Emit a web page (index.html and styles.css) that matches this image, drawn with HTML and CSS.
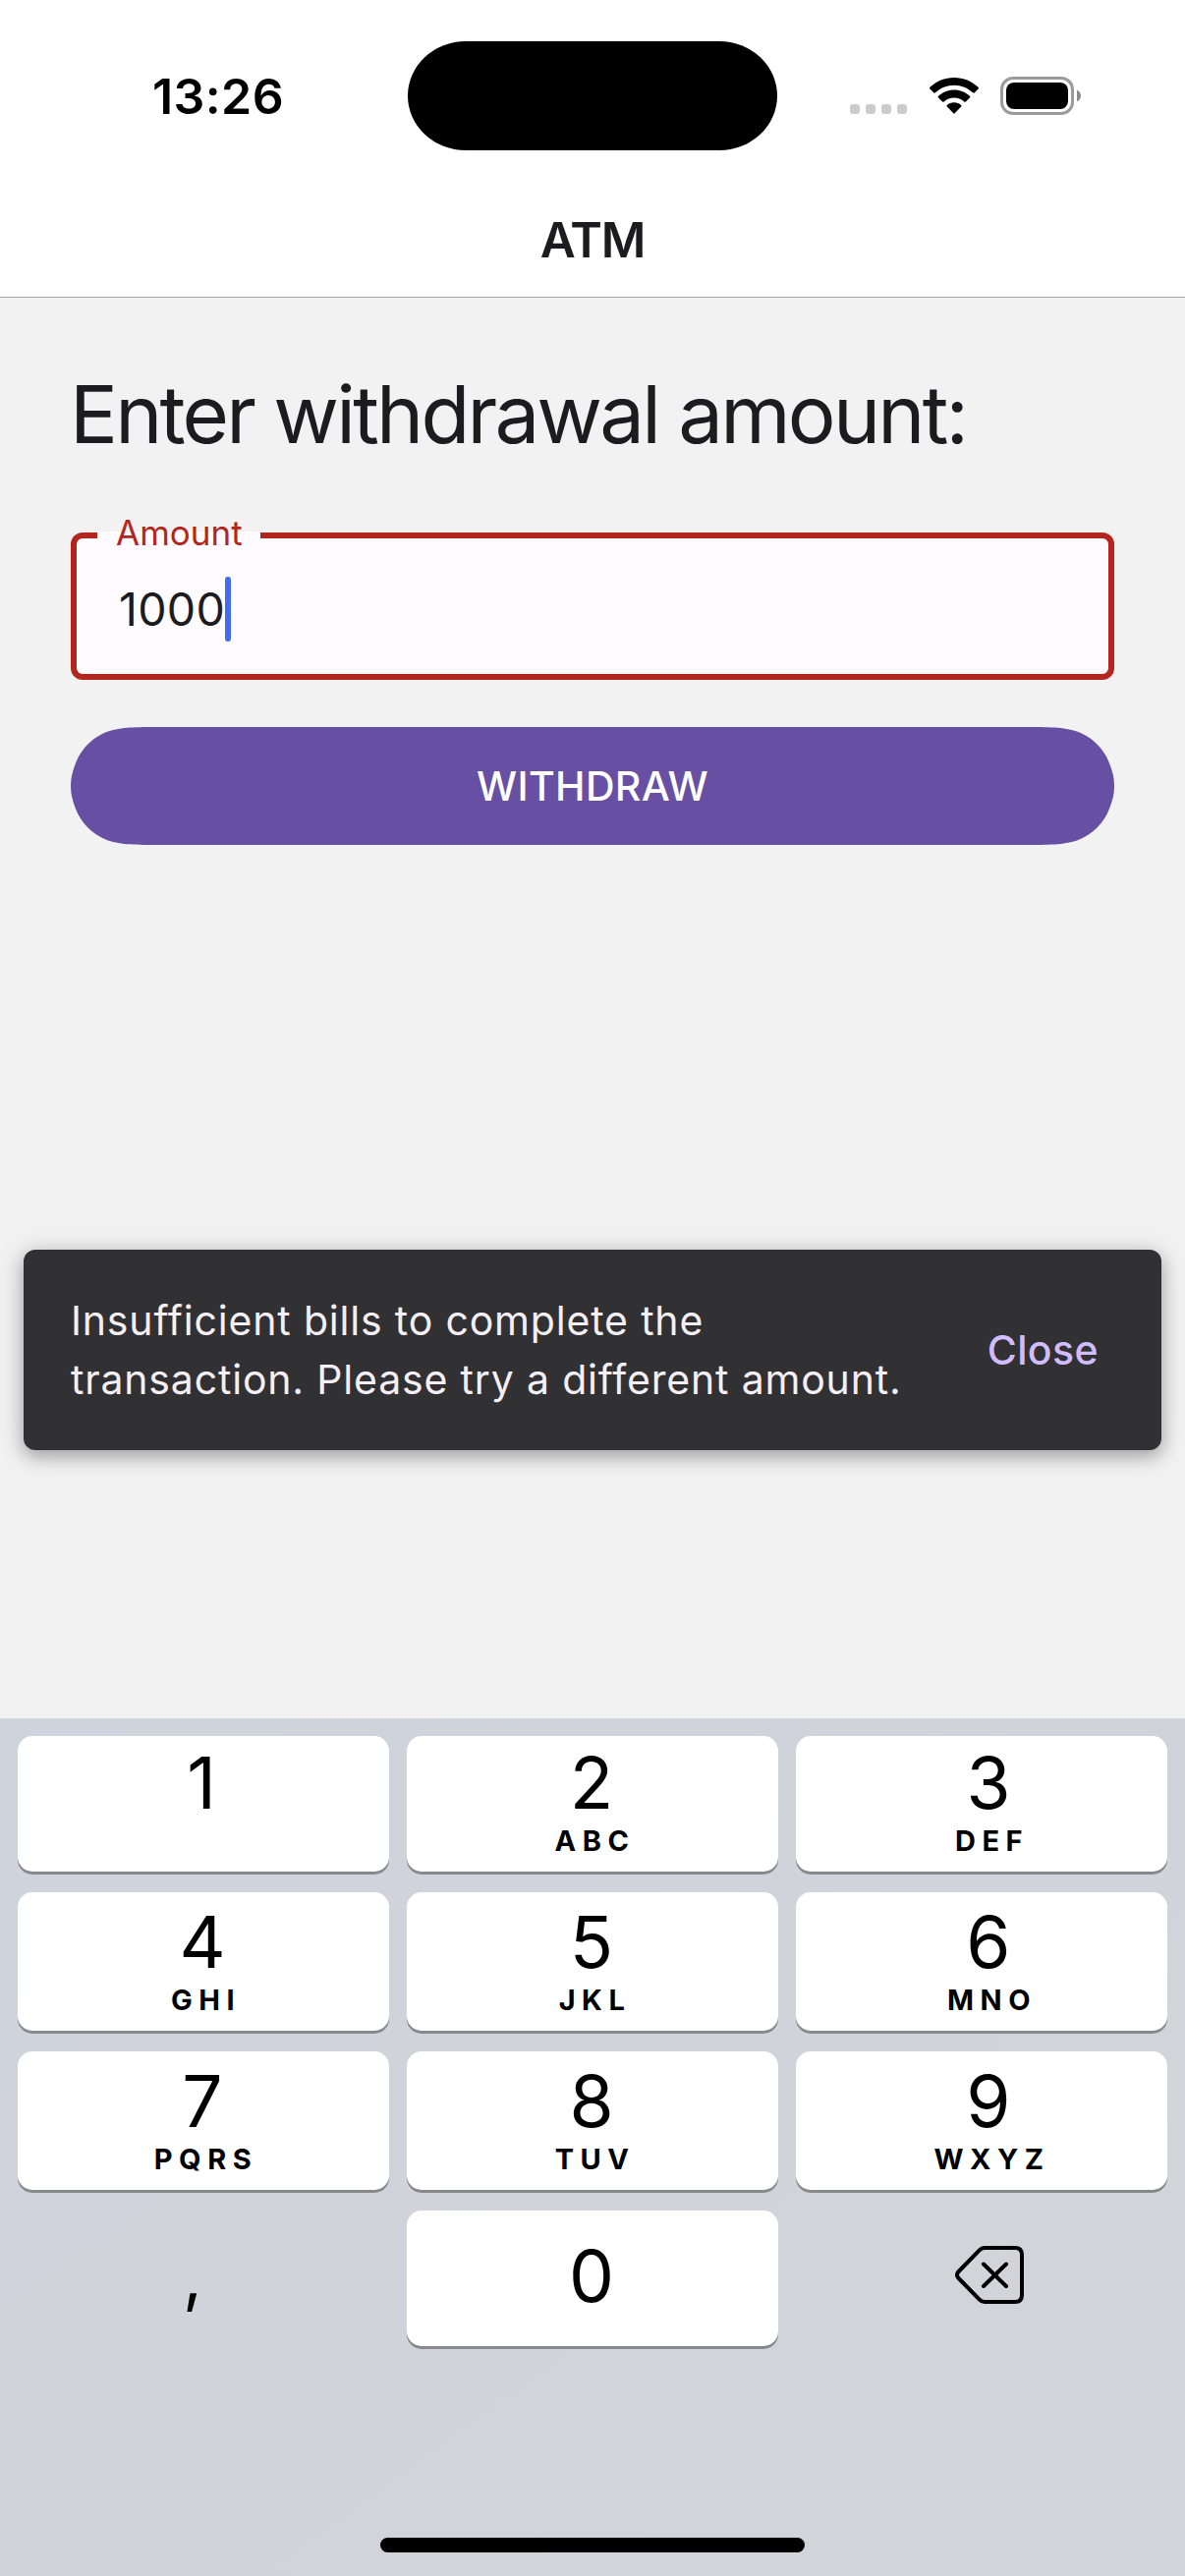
FILE: index.html
```html
<!DOCTYPE html>
<html lang="en">
<head>
<meta charset="utf-8">
<title>ATM</title>
<link rel="stylesheet" href="styles.css">
</head>
<body>
<div class="phone">
  <div class="status">
    <div class="status-side"><span class="time">13:26</span></div>
    <div class="island"></div>
    <div class="status-side status-icons">
      <svg class="dots" width="58" height="10" viewBox="0 0 58 10" fill="#cbcbcb">
        <rect width="10" height="10" rx="3"/><rect x="16" width="10" height="10" rx="3"/><rect x="32" width="10" height="10" rx="3"/><rect x="48" width="10" height="10" rx="3"/>
      </svg>
      <svg class="wifi" width="50" height="37" viewBox="0 0 50 37">
        <path d="M25 0C34.500 0 43.200 3.700 49.600 9.800Q50.400 10.600 49.600 11.500L45.800 15.300Q45 16 44.100 15.300C39 10.500 32.300 7.700 25 7.700S11 10.500 5.900 15.300Q5 16 4.200 15.300L.4 11.500Q-.4 10.600.4 9.800C6.800 3.700 15.500 0 25 0Z"/>
        <path d="M25 12.500C31.200 12.500 36.800 14.900 41 18.800Q41.800 19.600 41 20.500L36.900 24.500Q36.100 25.200 35.300 24.500C32.500 21.900 29 20.400 25 20.400S17.500 21.900 14.700 24.500Q13.900 25.200 13.100 24.500L9 20.500Q8.200 19.600 9 18.800C13.200 14.900 18.800 12.500 25 12.500Z"/>
        <path d="M25 25.300C27.700 25.300 30.200 26.200 32.200 27.900Q33 28.700 32.200 29.500L25.700 36.200Q25 36.900 24.300 36.200L17.800 29.500Q17 28.700 17.800 27.900C19.800 26.200 22.300 25.300 25 25.300Z"/>
      </svg>
      <svg class="battery" width="82" height="39" viewBox="0 0 82 39">
        <rect x="1.500" y="1.500" width="72" height="36" rx="11.500" fill="none" stroke="#9b9b9b" stroke-width="3"/>
        <rect x="6" y="6" width="63" height="27" rx="8"/>
        <path d="M78 13.500C80.700 14.800 82 17 82 19.500S80.700 24.200 78 25.500Z" fill="#8b8b8b"/>
      </svg>
    </div>
  </div>
  <header class="header"><h1 class="header-title">ATM</h1></header>
  <main class="content">
    <h2 class="heading">Enter withdrawal amount:</h2>
    <div class="field">
      <span class="field-label">Amount</span>
      <span class="field-value">1000</span><span class="caret"></span>
    </div>
    <button class="withdraw"><span>WITHDRAW</span></button>
    <div class="snackbar">
      <p class="snackbar-text">Insufficient bills to complete the<br>transaction. Please try a different amount.</p>
      <span class="snackbar-action">Close</span>
    </div>
  </main>
  <div class="keyboard">
    <div class="keys">
      <div class="key key-one"><span class="digit">1</span></div>
      <div class="key"><span class="digit">2</span><span class="letters">ABC</span></div>
      <div class="key"><span class="digit">3</span><span class="letters">DEF</span></div>
      <div class="key"><span class="digit">4</span><span class="letters">GHI</span></div>
      <div class="key"><span class="digit">5</span><span class="letters">JKL</span></div>
      <div class="key"><span class="digit">6</span><span class="letters">MNO</span></div>
      <div class="key"><span class="digit">7</span><span class="letters">PQRS</span></div>
      <div class="key"><span class="digit">8</span><span class="letters">TUV</span></div>
      <div class="key"><span class="digit">9</span><span class="letters">WXYZ</span></div>
      <div class="key key-plain"><span class="comma">,</span></div>
      <div class="key key-zero"><span class="digit">0</span></div>
      <div class="key key-plain">
        <svg class="backspace" width="70" height="59" viewBox="0 0 70 59" fill="none" stroke="#000" stroke-width="4" stroke-linecap="round" stroke-linejoin="round">
          <path d="M30 2H61Q68 2 68 9V50Q68 57 61 57H30Q27 57 24.800 54.600L3.200 32.500Q.8 29.500 3.200 26.500L24.800 4.400Q27 2 30 2Z"/>
          <path d="M29 18.500L52 41M52 18.500L29 41"/>
        </svg>
      </div>
    </div>
    <div class="home"></div>
  </div>
</div>
</body>
</html>
```
FILE: styles.css
```css
* { box-sizing: border-box; margin: 0; padding: 0; }

body {
  font-family: Inter, "Liberation Sans", sans-serif;
  color: #1c1b1f;
  background: #f2f2f2;
}

.phone {
  width: 1206px;
  height: 2622px;
  display: flex;
  flex-direction: column;
  overflow: hidden;
}

/* Status bar */
.status {
  height: 188px;
  padding-top: 41.500px;
  display: flex;
  align-items: flex-start;
  background: #fff;
}

.status-side {
  width: 415px;
  height: 111px;
  display: flex;
}

.time {
  margin: 26.500px 0 0 155px;
  font-size: 50px;
  line-height: 60px;
  font-weight: 600;
  letter-spacing: 0.400px;
  color: #000;
}

.island {
  width: 376px;
  height: 111px;
  border-radius: 59px / 55.500px;
  background: #000;
}

.status-icons { padding-left: 74px; }
.dots { margin-top: 64.500px; }
.wifi { margin: 37.500px 0 0 23px; }
.battery { margin: 36.500px 0 0 22px; }

/* Navigation header */
.header {
  height: 115px;
  display: flex;
  justify-content: center;
  background: #fff;
  border-bottom: 1px solid #a9a9ac;
}

.header-title {
  margin-top: 26px;
  font-size: 49.500px;
  line-height: 60px;
  font-weight: 600;
  letter-spacing: -1.200px;
}

/* Withdrawal form */
.content {
  flex: 1;
  padding: 65px 72px 0;
  position: relative;
}

.heading {
  margin-left: -1px;
  font-size: 81.500px;
  line-height: 108px;
  font-weight: 400;
  letter-spacing: -2.800px;
  white-space: nowrap;
}

.field {
  position: relative;
  height: 150px;
  margin-top: 66px;
  padding: 6px 0 0 43px;
  border: 6px solid #b3261e;
  border-radius: 12px;
  background: #fffbff;
  display: flex;
  align-items: center;
}

.field-label {
  position: absolute;
  left: 21px;
  top: -7px;
  width: 166px;
  height: 7px;
  padding-left: 19px;
  background: #fffbff;
  color: #b3261e;
  font-size: 35px;
  line-height: 2px;
}

.field-value {
  font-size: 46.500px;
  line-height: 60px;
  letter-spacing: 0.300px;
}

.caret {
  width: 6px;
  height: 66px;
  border-radius: 3px;
  background: #426bf2;
}

.withdraw {
  display: flex;
  align-items: center;
  justify-content: center;
  width: 1062px;
  height: 120px;
  margin-top: 48px;
  border: 0;
  background: #6750a4;
  color: #fff;
  font: 500 41px/60px Inter, "Liberation Sans", sans-serif;
  letter-spacing: 0.300px;
  clip-path: path("M91.700 0H970.300C996.700 0 1009.900 0 1024.100 4.500C1039.600 10.100 1051.900 22.400 1057.500 37.900C1060.500 46 1062 52 1062 60S1060.500 74 1057.500 82.100C1051.900 97.600 1039.600 109.900 1024.100 115.500C1009.900 120 996.700 120 970.300 120H91.700C65.300 120 52.100 120 37.900 115.500C22.400 109.900 10.100 97.600 4.500 82.100C1.500 74 0 68 0 60S1.500 46 4.500 37.900C10.100 22.400 22.400 10.100 37.900 4.500C52.100 0 65.300 0 91.700 0Z");
}

/* Snackbar floating over the content */
.snackbar {
  position: absolute;
  left: 24px;
  top: 969px;
  width: 1158px;
  height: 204px;
  padding: 0 64px 0 48px;
  display: flex;
  align-items: center;
  justify-content: space-between;
  border-radius: 12px;
  background: #313033;
  color: #f4eff4;
  font-size: 41px;
  box-shadow: 0 6px 18px rgba(0, 0, 0, 0.300), 0 3px 30px 6px rgba(0, 0, 0, 0.070);
}

.snackbar-text {
  line-height: 60px;
  letter-spacing: 0.820px;
  white-space: nowrap;
}

.snackbar-action {
  color: #d0bcff;
  font-weight: 500;
  line-height: 60px;
  letter-spacing: 0.400px;
}

/* Numeric keyboard */
.keyboard {
  height: 873px;
  padding: 18px 18px 24px;
  display: flex;
  flex-direction: column;
  justify-content: space-between;
  align-items: center;
  background: linear-gradient(to bottom right, #cfd3db 0%, #d0d3da 50%, #d1d4d8 75%);
  color: #000;
}

.keys {
  display: grid;
  grid-template-columns: repeat(3, 378px);
  grid-template-rows: 138px 141px 141px 138px;
  gap: 21px 18px;
}

.key {
  display: flex;
  flex-direction: column;
  align-items: center;
  justify-content: flex-end;
  padding: 0 2px 16px 0;
  border-radius: 15px;
  background: #fff;
  box-shadow: 0 3px 0 #88898d;
}

/* The right-hand column centres its captions towards the screen edge */
.key:nth-child(3n) { padding: 0 0 16px 14px; }

.key-one { padding: 0 4px 54px 0; }

.digit {
  font-size: 73px;
  line-height: 73px;
}

.letters {
  margin-top: 8px;
  margin-right: -7px;
  font-size: 29px;
  line-height: 30px;
  font-weight: 700;
  letter-spacing: 6.500px;
}

.key-zero { justify-content: center; padding: 0 2px 6px 0; }

.key.key-plain {
  background: none;
  box-shadow: none;
  justify-content: center;
  padding: 0;
}

.comma {
  margin: 0 22px 6px 0;
  font-size: 68px;
  line-height: 126px;
}

.backspace { margin-bottom: 7px; margin-left: 16px; }

.home {
  width: 432px;
  height: 15px;
  border-radius: 8px;
  background: #000;
}
```
